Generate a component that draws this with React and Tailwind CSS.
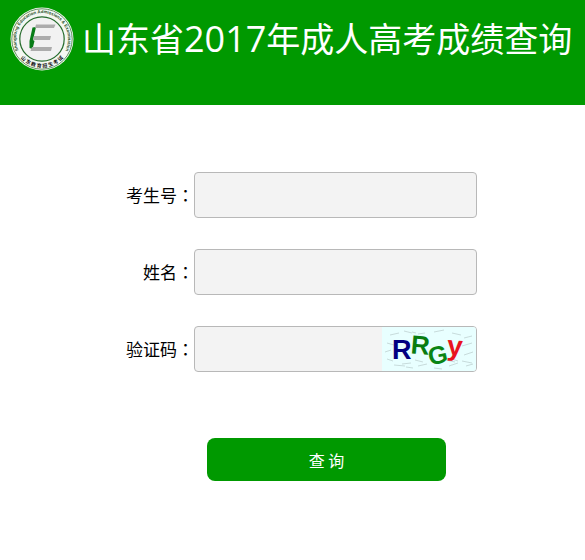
const sans = "font-['Noto_Sans_CJK_SC',sans-serif]";

// Short dashes scattered behind the code letters
const noise = [
  [8, 8, 9, -2], [22, 4, 8, 2], [36, 7, 7, -1], [52, 5, 10, -2], [70, 6, 9, 2], [82, 11, 8, -2],
  [5, 16, 7, 2], [80, 19, 10, -3], [64, 33, 9, 2], [3, 25, 6, -2], [5, 32, 6, 2], [20, 37, 9, -1],
  [33, 33, 8, 2], [12, 38, 11, 1], [36, 39, 9, -2], [67, 39, 9, -3], [80, 34, 10, 2], [82, 28, 9, -3],
  [30, 5, 4, 1], [84, 39, 7, -2], [24, 40, 7, 1], [52, 41, 8, 1], [70, 32, 6, 2],
];

function Logo() {
  return (
    <svg className="size-16 shrink-0" viewBox="0 0 64 64" aria-hidden="true">
      <defs>
        <path id="ringTop" d="M 10 46 A 26 26 0 1 1 54 46" />
        <path id="ringBottom" d="M 3.6 36 A 28.7 28.7 0 0 0 60.4 36" />
      </defs>
      <circle cx="32" cy="32" r="31.5" fill="#f4f8f2" />
      <circle cx="32" cy="32" r="30.2" fill="none" stroke="#3f7a3f" strokeWidth="0.8" />
      <circle cx="32" cy="32" r="22.2" fill="#f2f2f2" stroke="#256b2b" strokeWidth="1.2" />
      <text fill="#1d4d24" fontSize="4.4" fontWeight="700" fontFamily="Liberation Sans, sans-serif">
        <textPath href="#ringTop" startOffset="50%" textAnchor="middle">
          Shangdong Education Admissions &amp; Examination
        </textPath>
      </text>
      <text fill="#111" fontSize="5" fontWeight="700" fontFamily="Noto Sans CJK SC, sans-serif">
        <textPath href="#ringBottom" startOffset="50%" textAnchor="middle">
          山 东 教 育 招 生 考 试
        </textPath>
      </text>
      <path d="M22.5 20.5 L26 20 L23 33 L24.5 34 L22.5 42 L19.5 41 L19.5 34 Z" fill="#087c18" />
      <path d="M26 17.5 H45.5 L44 21 H25 Z" fill="#acacac" />
      <path d="M24 29 H41 L40 33 H23 Z" fill="#acacac" />
      <path d="M22 40 H42 L41 44 H20.5 Z" fill="#acacac" />
    </svg>
  );
}

function Captcha() {
  return (
    <svg className="h-full w-[94px] shrink-0" viewBox="0 0 94 44" role="img" aria-label="RRGy">
      <rect width="94" height="44" fill="#e8ffff" />
      {noise.map(([x, y, w, slope], i) => (
        <path key={i} d={`M${x} ${y} l${w} ${slope}`} stroke="#b9cccc" strokeWidth="0.7" />
      ))}
      <g fontFamily="Liberation Sans, sans-serif" fontWeight="700">
        <text x="10" y="32" fontSize="27" fill="#000080">R</text>
        <text x="29" y="27" fontSize="26" fill="#087c10" transform="rotate(5 37 18)">R</text>
        <text x="46" y="37" fontSize="25" fill="#0a8514" transform="rotate(-12 54 28)">G</text>
        <text x="65" y="28" fontSize="28" fill="#e81420" transform="rotate(4 70 22)">y</text>
      </g>
    </svg>
  );
}

function Field({ id, label, children }) {
  return (
    <div className="flex items-center">
      <label htmlFor={id} className="w-[194px] shrink-0 text-right text-[17px] text-black">
        {label}
        <span className="font-['Noto_Sans_CJK_JP',sans-serif]">：</span>
      </label>
      <div className="flex h-[46px] flex-1 overflow-hidden rounded-[4px] border border-[#b8b8b8] bg-[#f3f3f3]">
        <input id={id} name={id} type="text" className="min-w-0 flex-1 bg-transparent px-3 text-[17px] outline-none" />
        {children}
      </div>
    </div>
  );
}

export default function App() {
  return (
    <div className={`min-h-screen bg-white ${sans}`}>
      {/* Header */}
      <header className="flex h-[105px] items-start gap-2 bg-[#009900] pl-[10px] pt-[7px]">
        <Logo />
        <h1 className="whitespace-nowrap pt-[6px] text-[34px] leading-[50px] font-normal text-white">
          山东省<span className="font-['Open_Sans',sans-serif] text-[36px]">2017</span>年成人高考成绩查询
        </h1>
      </header>

      {/* Query form */}
      <form className="pt-[67px] pr-[108px]" onSubmit={(e) => e.preventDefault()}>
        <div className="flex flex-col gap-[31px]">
          <Field id="examNo" label="考生号" />
          <Field id="name" label="姓名" />
          <Field id="code" label="验证码">
            <Captcha />
          </Field>
        </div>
        <div className="mt-[66px] pr-[31px] pl-[207px]">
          <button type="submit" className="h-[43px] w-full rounded-lg bg-[#009900] text-base text-white">
            查 询
          </button>
        </div>
      </form>
    </div>
  );
}
